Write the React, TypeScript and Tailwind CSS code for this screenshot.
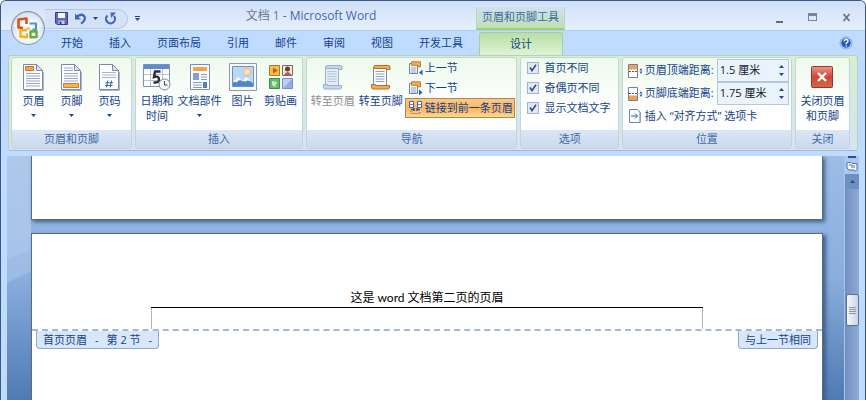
import type { ReactNode } from 'react';

/* ─── Data ──────────────────────────────────────────────── */
const TABS = ['开始', '插入', '页面布局', '引用', '邮件', '审阅', '视图', '开发工具'];
const OPTIONS = ['首页不同', '奇偶页不同', '显示文档文字'];

/* ─── Icons ─────────────────────────────────────────────── */
function OfficeLogo() {
  return (
    <svg viewBox="0 0 36 36" className="h-9 w-9">
      <defs>
        <radialGradient id="orb" cx="50%" cy="70%" r="65%">
          <stop offset="0" stopColor="#ffffff" />
          <stop offset="0.6" stopColor="#e9eef6" />
          <stop offset="1" stopColor="#b3c0d4" />
        </radialGradient>
      </defs>
      <circle cx="18" cy="18" r="16.5" fill="url(#orb)" stroke="#8190ac" />
      <path d="M3.5 17a14.5 14.5 0 0 1 29 0q-14 3-29 0z" fill="#fff" opacity="0.55" />
      <g fill="none" strokeLinejoin="round">
        <path d="M16.500 14V8.500l-8 1V17.500l4.500.5" stroke="#dd5219" strokeWidth="2.600" />
        <path d="M19.500 13.500h6.500v6h-3.500" stroke="#4d92d8" strokeWidth="2.200" />
        <path d="M16 21.500v-1.500l-5.500.5v6l6.500.8v-4" stroke="#f2b01c" strokeWidth="2.400" />
        <path d="M20.500 21.500l6-.3v5.800l-6 .4z" stroke="#67a83c" strokeWidth="2.400" />
      </g>
      <path d="M17 17h3v3h-3z" fill="#e98b2c" opacity="0.5" />
    </svg>
  );
}

function SaveIcon() {
  return (
    <svg viewBox="0 0 13 13" className="h-[13px] w-[13px]">
      <path d="M.5.5h12v12H2l-1.500-1.500z" fill="#6468b4" stroke="#3c3f86" />
      <path d="M3 1h7v5H3z" fill="#f3f6fc" />
      <path d="M3.500 8.500h6V12h-6z" fill="#c9d0e6" />
      <path d="M4.500 9.500h2V12h-2z" fill="#3c3f86" />
    </svg>
  );
}

function UndoIcon() {
  return (
    <svg viewBox="0 0 13 13" className="h-[13px] w-[13px]" fill="none">
      <path d="M3 4.500q5-3.500 7.500 0 1.500 4-3.500 7" stroke="#4167ba" strokeWidth="2.200" />
      <path d="M1 1.500v6h6z" fill="#4167ba" />
    </svg>
  );
}

function RedoIcon() {
  return (
    <svg viewBox="0 0 13 13" className="h-[13px] w-[13px]" fill="none">
      <path d="M3.500 3.500a4.500 4.500 0 1 0 6.500.5" stroke="#4167ba" strokeWidth="2.200" />
      <path d="M6.500.5h5.500L7 6z" fill="#4167ba" />
    </svg>
  );
}

function Caret({ up = false }: { up?: boolean }) {
  return (
    <svg viewBox="0 0 5 3" className="h-[3px] w-[5px]">
      <path d={up ? 'M0 3h5L2.500 0z' : 'M0 0h5L2.500 3z'} fill="#1f4a8c" />
    </svg>
  );
}

function HelpIcon() {
  return (
    <svg viewBox="0 0 14 14" className="h-3.5 w-3.5">
      <circle cx="7" cy="7" r="6" fill="#dce9fa" stroke="#7ea3dd" />
      <circle cx="7" cy="7" r="4.800" fill="#2459bd" />
      <path d="M5 5.500q.3-2 2.200-2T9 5.300Q9 6.300 7.200 7.300V8.300" fill="none" stroke="#fff" strokeWidth="1.400" />
      <circle cx="7.200" cy="10" r=".8" fill="#fff" />
    </svg>
  );
}

function PageIcon({ kind }: { kind: 'header' | 'footer' | 'number' }) {
  return (
    <svg viewBox="0 0 22 28" className="h-7 w-[22px]">
      <path d="M1.500 1.500h13l6 6v19h-19z" fill="#fdfeff" stroke="#7b8ba6" />
      <path d="M2 27.500h19.500V9" fill="none" stroke="#aab5c6" />
      <path d="M14.500 1.500v6h6z" fill="#dbe4f1" stroke="#7b8ba6" />
      {kind === 'header' && (
        <>
          <path d="M3.500 3.500h8v4h-8z" fill="#f3a64a" stroke="#c7742a" />
          <path d="M4 10.500h14M4 13h14M4 15.500h14M4 18h14M4 20.500h14M4 23h14" stroke="#99a7cb" />
        </>
      )}
      {kind === 'footer' && (
        <>
          <path d="M4 5h9M4 7.500h9M4 10.500h14M4 13h14M4 15.500h14M4 18h14" stroke="#99a7cb" />
          <path d="M3.500 20.500h15v4h-15z" fill="#f6b254" stroke="#d27a2c" />
        </>
      )}
      {kind === 'number' && (
        <>
          <path d="M4 9.500h14M4 12h14M4 14.500h14" stroke="#a9b4cb" />
          <path d="M9.800 17.500l-1.300 7M13.500 17.500l-1.300 7M7.500 19.800h7.500M7 22.500h7.500" stroke="#3b62a0" />
        </>
      )}
    </svg>
  );
}

function DateIcon() {
  return (
    <svg viewBox="0 0 28 28" className="h-7 w-7">
      <path d="M.5 1.500h26v22H.5z" fill="#fbfcff" stroke="#7e92b5" />
      <path d="M1 2h25v4H1z" fill="#5f8bd6" />
      <path d="M1 11.500h25M1 17.500h25M7.500 6v17M19.500 6v17" stroke="#b9c2d2" />
      <path d="M17.500 8.500H12l-1 5.500q5-1.500 5 2.500 0 3.500-5.500 3" fill="none" stroke="#2d2d33" strokeWidth="2.400" />
      <circle cx="21.500" cy="21.500" r="5.500" fill="#f3f6fb" stroke="#7d8698" />
      <path d="M21.500 18v4h3" fill="none" stroke="#39414f" />
    </svg>
  );
}

function PartsIcon() {
  return (
    <svg viewBox="0 0 22 28" className="h-7 w-[22px]">
      <path d="M1.500 1.500h19v25h-19z" fill="#fbfcff" stroke="#7d8dab" />
      <path d="M4 4h14v4H4z" fill="#f3a447" />
      <path d="M4 10h6v7H4z" fill="#7f9fda" />
      <path d="M12 11.500h6M12 14h6M12 16.500h6M4 19.500h9M4 22h9M4 24.500h9" stroke="#8f9ab0" />
      <path d="M14 19h4v6h-4z" fill="#4f7bc9" />
    </svg>
  );
}

function PictureIcon() {
  return (
    <svg viewBox="0 0 28 28" className="h-7 w-7">
      <path d="M.5.5h27v27H.5z" fill="#f7f9fc" stroke="#8b9ab2" />
      <path d="M3.500 3.500h21v20h-21z" fill="#b9d8f6" stroke="#6c93c4" />
      <circle cx="18" cy="9" r="3.500" fill="#fde3bd" stroke="#f2b271" />
      <path d="M4 20l5.500-5 3.500 3.500 4-4 7 6V23H4z" fill="#4d86c8" />
      <path d="M4 19l5.500-5 3 3-3 .5-2 2-2-1zM13 18l4-4 5 4-4-.5-1 1z" fill="#fff" />
    </svg>
  );
}

function ClipArtIcon() {
  return (
    <svg viewBox="0 0 26 26" className="h-[26px] w-[26px]">
      <path d="M1.500 1.500h10v10h-10z" fill="#f7c143" stroke="#a57a28" />
      <path d="M5 3.500l5 3-5 3z" fill="#d8541c" />
      <path d="M14.500 1.500h10v10h-10z" fill="#f4e7d5" stroke="#746a70" />
      <circle cx="19.500" cy="5" r="2.500" fill="#5e4136" />
      <path d="M16 11q3.500-6 7.500 0z" fill="#c35539" />
      <path d="M1.500 14.500h10v10h-10z" fill="#68b971" stroke="#438a52" />
      <path d="M4 17l5 1-2 5-3-2z" fill="#c7efbe" />
      <path d="M14.500 14.500h10v10h-10z" fill="#bdd0f4" stroke="#6f8fce" />
      <path d="M15 24l9-9v9z" fill="#8faee7" />
    </svg>
  );
}

function GoToIcon({ footer = false }: { footer?: boolean }) {
  const line = footer ? '#7a89a8' : '#9db0cc';
  const roll = footer ? '#f5a94f' : '#c6d4e8';
  const edge = footer ? '#b8702c' : '#9aadca';
  return (
    <svg viewBox="0 0 22 26" className="h-[26px] w-[22px]">
      <path d="M3.500 3.500h13v19h-13z" fill={footer ? '#fff' : '#e3ebf6'} stroke={line} />
      <path d="M5.500 7.500h9M5.500 10h9M5.500 12.500h9M5.500 15h9M5.500 17.500h9" stroke={footer ? '#8e9cc0' : '#b6c4da'} />
      <path d="M5 1.500h13.500q1.500 0 1.500 1.500v2.500h-3.500V4.500H3.500Q3.500 1.500 5 1.500z" fill={roll} stroke={edge} />
      <path d="M1.500 20.500h4v1h14q.5 3.500-1.500 3.500H3q-1.500 0-1.500-2z" fill={roll} stroke={edge} />
    </svg>
  );
}

function SectionIcon({ next = false }: { next?: boolean }) {
  return (
    <svg viewBox="0 0 15 15" className="h-[15px] w-[15px]">
      <path d="M1.500 2.500h8v10h-8z" fill="#eff3fa" stroke="#6f83a6" />
      <path d="M3 7h5M3 9h5M3 11h5" stroke="#96a5c2" />
      <path d="M3.500.8h9v5h-3v-1.500h-6z" fill="#f6aa4d" stroke="#c07a34" />
      <path d={next ? 'M11 8.500v6l3.500-3z' : 'M14.500 8.500v6l-3.500-3z'} fill="#2d5fae" />
    </svg>
  );
}

function LinkIcon() {
  return (
    <svg viewBox="0 0 15 14" className="h-3.5 w-[15px]">
      <path d="M1.500.5h4v6h-4zM9.500.5h4v6h-4z" fill="#fff" stroke="#4c6599" />
      <path d="M2 3.500h3M10 3.500h3" stroke="#7188ba" />
      <path d="M3 8.500h3.500M8.500 8.500H12M6 7v3M9 7v3" stroke="#344e87" strokeWidth="1.500" />
      <path d="M3 10v2.500h9V10" fill="none" stroke="#566f9e" strokeDasharray="1 1" />
    </svg>
  );
}

function DistanceIcon({ bottom = false }: { bottom?: boolean }) {
  return (
    <svg viewBox="0 0 15 14" className="h-3.5 w-[15px] shrink-0">
      <path d="M.5.5h9v13h-9z" fill="#fbfcff" stroke="#71829f" />
      <path d={bottom ? 'M1 8.500h8V13H1z' : 'M1 1h8v4.500H1z'} fill="#f1a24a" />
      <path d={bottom ? 'M1 6.500h8' : 'M1 7.500h8'} stroke="#4a5b7a" strokeDasharray="2 1" />
      <path d="M13 4l-1.500 2.500h3zM13 10l-1.500-2.500h3z" fill="#2d5fae" />
    </svg>
  );
}

function AlignTabIcon() {
  return (
    <svg viewBox="0 0 15 14" className="h-3.5 w-[15px] shrink-0">
      <path d="M1.500.5h8l2.500 2.500v10.500h-10.500z" fill="#f8fbff" stroke="#6f83a6" />
      <path d="M12.500 3v10.500" stroke="#8d9cb8" />
      <path d="M3 7h6.500M7 4.500L9.500 7 7 9.500" fill="none" stroke="#3466b4" />
    </svg>
  );
}

function CloseIcon() {
  return (
    <svg viewBox="0 0 22 22" className="h-[22px] w-[22px]">
      <defs>
        <linearGradient id="red" x2="0" y2="1">
          <stop offset="0" stopColor="#e79a90" />
          <stop offset="0.5" stopColor="#cf4536" />
          <stop offset="1" stopColor="#d9694e" />
        </linearGradient>
      </defs>
      <rect x=".5" y=".5" width="21" height="21" rx="1" fill="url(#red)" stroke="#92362d" />
      <path d="M7 7l8 8M15 7l-8 8" stroke="#fff" strokeWidth="2.400" />
    </svg>
  );
}

/* ─── Ribbon building blocks ────────────────────────────── */
function Group({ title, className, children }: { title: string; className: string; children: ReactNode }) {
  return (
    <section className={`flex flex-col overflow-hidden rounded-[3px] border border-[#c3d3dc] ${className}`}>
      <div className="flex h-[72px] justify-center bg-linear-to-b from-[#eefaeb] via-[#fafdfa] to-white">{children}</div>
      <h2 className="h-[18px] bg-linear-to-b from-[#dbe6f5] to-[#cbd9ef] text-center text-[11px] leading-[17px] text-[#3e6aaa]">
        {title}
      </h2>
    </section>
  );
}

function BigButton({
  icon, label, second, menu = false, disabled = false, className,
}: { icon: ReactNode; label: string; second?: string; menu?: boolean; disabled?: boolean; className: string }) {
  return (
    <button
      type="button"
      disabled={disabled}
      className={`flex flex-col items-center whitespace-nowrap pt-[3px] text-[11px] leading-[15px] text-[#15428b] disabled:text-[#8d8d8d] ${className}`}
    >
      <span className="flex h-8 items-center">{icon}</span>
      <span>{label}</span>
      {second && <span>{second}</span>}
      {menu && <span className="flex h-[15px] items-center"><Caret /></span>}
    </button>
  );
}

function CheckRow({ label }: { label: string }) {
  return (
    <label className="flex h-5 items-center gap-[5px] whitespace-nowrap">
      <span className="grid h-3 w-3 place-items-center">
        <input
          type="checkbox"
          defaultChecked
          className="peer col-start-1 row-start-1 h-3 w-3 appearance-none border border-[#a0b4cf] bg-[#dfe8f5]"
        />
        <svg
          viewBox="0 0 8 8"
          className="pointer-events-none invisible col-start-1 row-start-1 h-2 w-2 peer-checked:visible"
        >
          <path d="M1 3.500l2 3L7 .8" fill="none" stroke="#3a4f86" strokeWidth="1.600" />
        </svg>
      </span>
      {label}
    </label>
  );
}

function SpinRow({ icon, label, value, id }: { icon: ReactNode; label: string; value: string; id: string }) {
  return (
    <div className="flex h-[23px] items-center gap-0.5 whitespace-nowrap">
      {icon}
      <label htmlFor={id} className="w-[70px] shrink-0">{label}</label>
      <span className="flex h-[23px] min-w-0 flex-1 border border-[#b3c7e1] bg-[#eaf2fb]">
        <input id={id} defaultValue={value} className="min-w-0 flex-1 pl-0.5 text-[11px] text-[#111827] outline-none" />
        <span className="flex w-[13px] flex-col items-center justify-around py-[3px]">
          <button type="button" aria-label={`${label} +`}><Caret up /></button>
          <button type="button" aria-label={`${label} -`}><Caret /></button>
        </span>
      </span>
    </div>
  );
}

/* ─── Window chrome ─────────────────────────────────────── */
function TitleBar() {
  return (
    <header className="flex h-[29px] items-stretch bg-linear-to-b from-[#cfe0f7] via-[#dbe8f9] to-[#e4effd] pr-[14px]">
      <div className="flex w-[145px] shrink-0 items-center pl-11 pt-1.5">
        <div className="flex h-5 w-[83px] items-center gap-1.5 rounded-r-full border border-l-0 border-[#b4c8e6] bg-[#d3e2f6] pl-[10px]">
          <button type="button" aria-label="保存"><SaveIcon /></button>
          <button type="button" aria-label="撤消" className="flex items-center gap-1.5"><UndoIcon /><Caret /></button>
          <button type="button" aria-label="恢复"><RedoIcon /></button>
        </div>
        <button type="button" aria-label="自定义快速访问工具栏" className="ml-[7px] flex flex-col items-center gap-px">
          <span className="h-px w-[5px] bg-[#23406e]" />
          <Caret />
        </button>
      </div>
      <h1 className="w-[330px] shrink-0 pt-1.5 text-center text-xs leading-[18px] text-[#3e6aaa]">
        <span className="text-[#6c7a90]">文档 1</span> - Microsoft Word
      </h1>
      <div className="mt-1.5 w-[89px] shrink-0 border-x border-b-2 border-[#b9d3cf] border-b-[#9bd46f] bg-linear-to-b from-[#cfe0f0] to-[#bfe0b4] text-center text-[11px] leading-[19px] text-[#3c6a9c]">
        页眉和页脚工具
      </div>
      <div className="ml-auto flex items-center gap-[25px] pt-[3px]">
        <button type="button" aria-label="最小化" className="h-3 w-[7px] border-b-2 border-[#5c6b84]" />
        <button type="button" aria-label="最大化" className="h-2 w-[9px] border border-t-[3px] border-[#7485a0]" />
        <button type="button" aria-label="关闭">
          <svg viewBox="0 0 9 9" className="h-[9px] w-[9px]">
            <path d="M1.500 1l6 7M7.500 1l-6 7" stroke="#66758f" strokeWidth="1.800" />
          </svg>
        </button>
      </div>
    </header>
  );
}

function TabStrip() {
  return (
    <nav className="flex h-[25px] items-stretch border-t border-[#b2cdf0] bg-[#bfdbff] pl-[47px] pr-3 text-[11px] text-[#15428b]">
      {TABS.map(t => (
        <button key={t} type="button" className="shrink-0 px-[13px]">{t}</button>
      ))}
      <button
        type="button"
        className="ml-[3px] mt-px w-[84px] shrink-0 rounded-t-[3px] border border-b-0 border-[#a5cfa0] bg-linear-to-b from-[#b9dfa4] to-[#def3d3]"
      >
        设计
      </button>
      <button type="button" aria-label="帮助" className="ml-auto"><HelpIcon /></button>
    </nav>
  );
}

function Ribbon() {
  return (
    <div className="mx-[7px] flex gap-[3px] rounded-[3px] border border-[#b5d3b4] border-b-[#9fb8d6] bg-[#dff0dc] bg-linear-to-b from-[#d8efcf] to-[#d6e4f2] py-px pl-0.5 pr-[7px] text-[11px] text-[#15428b]">
      <Group title="页眉和页脚" className="flex-[121_1_0px]">
        <BigButton className="w-[38px]" icon={<PageIcon kind="header" />} label="页眉" menu />
        <BigButton className="w-[38px]" icon={<PageIcon kind="footer" />} label="页脚" menu />
        <BigButton className="w-[38px]" icon={<PageIcon kind="number" />} label="页码" menu />
      </Group>

      <Group title="插入" className="flex-[169_1_0px]">
        <BigButton className="w-[37px]" icon={<DateIcon />} label="日期和" second="时间" />
        <BigButton className="w-12" icon={<PartsIcon />} label="文档部件" menu />
        <BigButton className="w-[38px]" icon={<PictureIcon />} label="图片" />
        <BigButton className="w-[38px]" icon={<ClipArtIcon />} label="剪贴画" />
      </Group>

      <Group title="导航" className="flex-[213_1_0px]">
        <BigButton className="w-12" icon={<GoToIcon />} label="转至页眉" disabled />
        <BigButton className="w-12" icon={<GoToIcon footer />} label="转至页脚" />
        <div className="flex flex-col whitespace-nowrap">
          <button type="button" className="flex h-5 items-center gap-0.5 pl-[3px]"><SectionIcon />上一节</button>
          <button type="button" className="flex h-5 items-center gap-0.5 pl-[3px]"><SectionIcon next />下一节</button>
          <button
            type="button"
            className="flex h-5 w-[110px] items-center gap-0.5 border border-[#b08a4a] bg-linear-to-b from-[#f8c98a] via-[#fbb660] to-[#fdd58c] pl-0.5"
          >
            <LinkIcon />链接到前一条页眉
          </button>
        </div>
      </Group>

      <Group title="选项" className="flex-[98_1_0px]">
        <div className="flex flex-1 flex-col pl-1.5">
          {OPTIONS.map(o => <CheckRow key={o} label={o} />)}
        </div>
      </Group>

      <Group title="位置" className="flex-[171_1_0px]">
        <div className="flex min-w-0 flex-1 flex-col pl-[5px] pr-0.5 pt-px">
          <SpinRow id="top" icon={<DistanceIcon />} label="页眉顶端距离:" value="1.5 厘米" />
          <SpinRow id="bottom" icon={<DistanceIcon bottom />} label="页脚底端距离:" value="1.75 厘米" />
          <button type="button" className="flex h-[22px] items-center gap-0.5 whitespace-nowrap">
            <AlignTabIcon />插入 “对齐方式” 选项卡
          </button>
        </div>
      </Group>

      <Group title="关闭" className="flex-[54_1_0px]">
        <BigButton className="w-12" icon={<CloseIcon />} label="关闭页眉" second="和页脚" />
      </Group>
    </div>
  );
}

/* ─── Document ──────────────────────────────────────────── */
function DocumentPages() {
  return (
    <main className="relative flex min-w-0 flex-1 flex-col overflow-hidden bg-linear-to-b from-[#9dbce6] via-[#8aaedd] to-[#4f7ab3] pl-6 pr-[21px]">
      {/* glare sweeping over the workspace */}
      <svg viewBox="0 0 24 245" className="absolute left-0 top-0 h-[245px] w-6">
        <path d="M0 0h24v115L0 127z" fill="#b9d0f0" opacity="0.4" />
        <path d="M0 0h24v94L0 103z" fill="#b9d0f0" opacity="0.35" />
      </svg>
      <div className="relative h-16 shrink-0 border border-t-0 border-[#5d6b80] bg-white shadow-[2px_2px_4px_#3f5f8c]" />
      <article className="relative mt-[13px] flex-1 border border-b-0 border-[#5d6b80] bg-white shadow-[3px_2px_4px_#3f5f8c]">
        <p className="mx-[119px] mt-14 border-b border-black pb-px text-center font-['Lato','Noto_Sans_CJK_SC',sans-serif] text-xs leading-4 text-black">
          这是 word 文档第二页的页眉
        </p>
        <div className="mx-[119px] h-[21px] border-x border-[#b5b5b5]" />
        <div className="border-t-2 border-dashed border-[#9fb8dc]" />
        <div className="flex justify-between px-1 text-[11px] leading-[17px] text-[#15428b]">
          <span className="flex gap-2 rounded-b-[4px] border border-t-0 border-[#8ea9cb] bg-[#d8e7f8] px-1.5">
            <span>首页页眉</span>
            <span>-</span>
            <span>第 2 节</span>
            <span>-</span>
          </span>
          <span className="rounded-b-[4px] border border-t-0 border-[#8ea9cb] bg-[#d8e7f8] px-1.5">与上一节相同</span>
        </div>
      </article>
    </main>
  );
}

function ScrollBar() {
  return (
    <aside className="flex w-[15px] shrink-0 flex-col items-center border-l border-[#a8c4ec] bg-[#a9c7f0]">
      <div className="h-0.5 w-2 shrink-0 bg-[#33517f]" />
      <button type="button" aria-label="标尺" className="flex h-4 items-center">
        <svg viewBox="0 0 12 11" className="h-[11px] w-3">
          <path d="M1 1.500h4l1 1h5v6l-2 2-1-1.500H3L1 7z" fill="#f4f8ff" stroke="#55719f" />
          <path d="M3 4h3v3M8 4v3" fill="none" stroke="#55719f" />
        </svg>
      </button>
      <div className="flex w-full flex-1 flex-col items-center bg-linear-to-r from-[#7090c0] to-[#8eabd5]">
        <button type="button" aria-label="向上" className="flex h-[15px] w-full items-center justify-center bg-[#6f8fc0]">
          <Caret up />
        </button>
        <div className="mt-[105px] flex h-8 w-[13px] flex-col items-center justify-center gap-px rounded-[2px] border border-[#5a6f92] bg-linear-to-r from-[#f5f8fc] to-[#cbd5e4]">
          <span className="h-px w-[7px] bg-[#8a96aa]" />
          <span className="h-px w-[7px] bg-[#8a96aa]" />
          <span className="h-px w-[7px] bg-[#8a96aa]" />
          <span className="h-px w-[7px] bg-[#8a96aa]" />
        </div>
      </div>
    </aside>
  );
}

export default function App() {
  return (
    <div className="relative flex h-screen flex-col overflow-hidden rounded-t-[6px] border border-b-0 border-[#3c5683] bg-[#bfdbff] font-['Open_Sans','Noto_Sans_CJK_SC',sans-serif]">
      <TitleBar />
      <TabStrip />
      <Ribbon />
      <div className="mx-1.5 mt-[5px] flex min-h-0 flex-1">
        <DocumentPages />
        <ScrollBar />
      </div>
      <button type="button" aria-label="Office 按钮" className="absolute left-[9px] top-[9px]">
        <OfficeLogo />
      </button>
    </div>
  );
}
